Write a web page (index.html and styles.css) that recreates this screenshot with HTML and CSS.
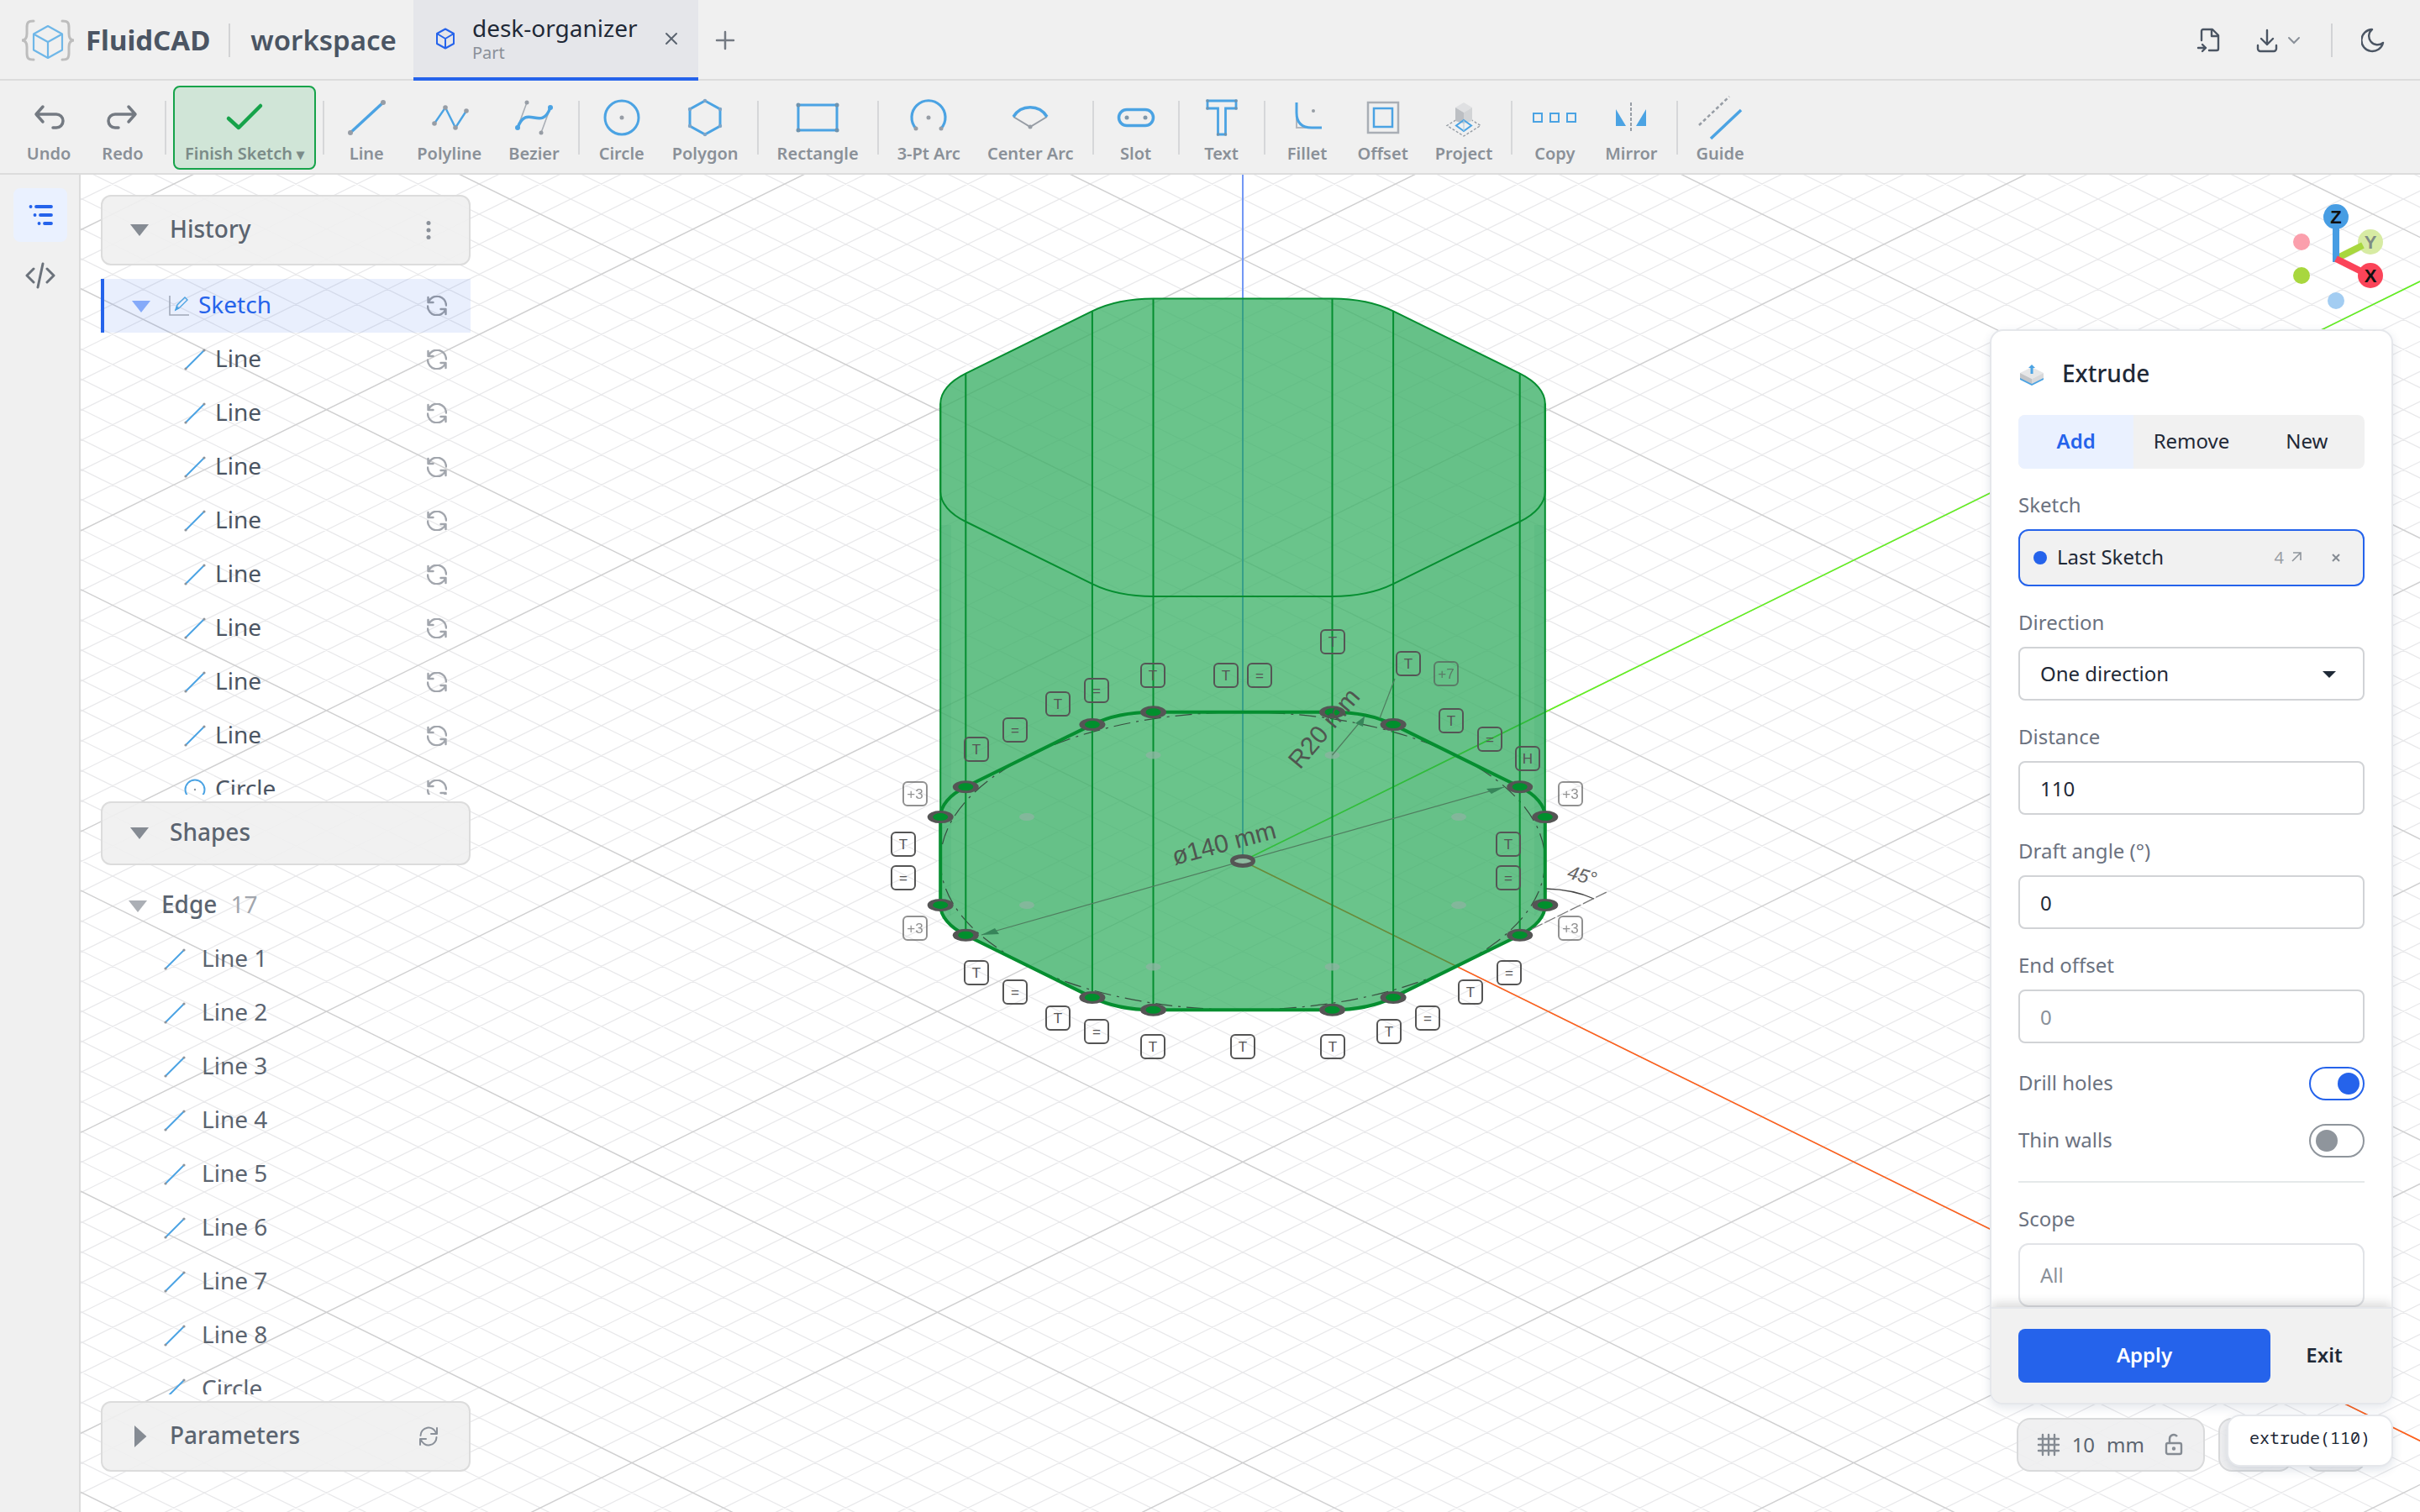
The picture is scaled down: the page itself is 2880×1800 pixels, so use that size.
FILE: index.html
```html
<!DOCTYPE html>
<html lang="en">
<head>
<meta charset="utf-8">
<title>FluidCAD - desk-organizer</title>
<link rel="stylesheet" href="styles.css">
</head>
<body>
<svg class="defs" aria-hidden="true">
  <symbol id="i-line" viewBox="0 0 28 28"><path d="M3 25 25 3" stroke="#4ba3e3" stroke-width="2"/><circle cx="3" cy="25" r="1.6" fill="#8f959c"/><circle cx="25" cy="3" r="1.6" fill="#8f959c"/></symbol>
  <symbol id="i-circle" viewBox="0 0 28 28"><circle cx="14" cy="14" r="11.5" fill="none" stroke="#4ba3e3" stroke-width="2"/><circle cx="14" cy="14" r="1.2" fill="#8f959c"/></symbol>
  <symbol id="i-sync" viewBox="0 0 24 24"><g fill="none" stroke="currentColor" stroke-width="2.4" stroke-linecap="round" stroke-linejoin="round"><path d="M1.5 2v6h6M1.8 7.6A11 11 0 0 1 23 11.5"/><path d="M22.500 22v-6h-6M22.200 16.400A11 11 0 0 1 1 12.500"/></g></symbol>
  <symbol id="i-cube" viewBox="0 0 24 26"><path d="M12 1.500 22 7v12l-10 5.500L2 19V7zM2 7l10 6 10-6M12 13v11.500" fill="none" stroke="currentColor" stroke-width="2" stroke-linejoin="round"/></symbol>
</svg>

<header class="topbar">
  <a class="brand" href="#">
    <svg width="66" height="50" viewBox="0 0 66 50" fill="none"><g stroke="#bdbdbd" stroke-width="3" stroke-linecap="round"><path d="M16 2c-7 0-8 2-8 8v7c0 5-2 8-6 8 4 0 6 3 6 8v7c0 6 1 8 8 8"/><path d="M50 2c7 0 8 2 8 8v7c0 5 2 8 6 8-4 0-6 3-6 8v7c0 6-1 8-8 8"/></g><path d="M33 8 50 17.500v19L33 46 16 36.500v-19zM16 17.500l17 9.500 17-9.500M33 27v19" stroke="#6fb7e8" stroke-width="2.200" stroke-linejoin="round"/></svg>
    <span>FluidCAD</span>
  </a>
  <span class="rule"></span>
  <a class="workspace" href="#">workspace</a>
  <div class="tab">
    <svg class="tab-icon" width="24" height="26"><use href="#i-cube"/></svg>
    <div class="tab-text"><a class="tab-name" href="#">desk-organizer</a><span class="tab-kind">Part</span></div>
    <button class="bare" aria-label="Close tab"><svg width="16" height="16" viewBox="0 0 16 16"><path d="m2 2 12 12M14 2 2 14" stroke="#5b6470" stroke-width="2" stroke-linecap="round"/></svg></button>
  </div>
  <button class="bare add-tab" aria-label="New tab"><svg width="24" height="24" viewBox="0 0 24 24"><path d="M12 2v20M2 12h20" stroke="#747a82" stroke-width="2.500" stroke-linecap="round"/></svg></button>
  <div class="top-actions">
    <button class="bare" aria-label="Import"><svg width="28" height="30" viewBox="0 0 28 30" fill="none" stroke="#4b5563" stroke-width="2.400" stroke-linecap="round" stroke-linejoin="round"><path d="M6 15V4a2 2 0 0 1 2-2h11l7 7v16a2 2 0 0 1-2 2h-9M18 2v8h8M2 24h9M7 20l4 4-4 4"/></svg></button>
    <button class="bare download" aria-label="Export"><svg width="28" height="30" viewBox="0 0 28 30" fill="none" stroke="#4b5563" stroke-width="2.400" stroke-linecap="round" stroke-linejoin="round"><path d="M14 3v17M7 13l7 7 7-7M3 21v4a3 3 0 0 0 3 3h16a3 3 0 0 0 3-3v-4"/></svg><svg width="16" height="12" viewBox="0 0 16 12" fill="none"><path d="m2 3 6 6 6-6" stroke="#8a9099" stroke-width="2" stroke-linecap="round"/></svg></button>
    <span class="rule"></span>
    <button class="bare" aria-label="Dark mode"><svg width="28" height="30" viewBox="0 0 28 30"><path d="M13 2A13 13 0 1 0 26 18 10 10 0 0 1 13 2z" fill="none" stroke="#4b5563" stroke-width="2.400" stroke-linejoin="round"/></svg></button>
  </div>
</header>

<div class="toolbar" role="toolbar">
  <button class="tool"><svg viewBox="0 0 56 56" fill="none" stroke="#747a82" stroke-width="3.500" stroke-linecap="round" stroke-linejoin="round"><path d="m21 15-8 9 8 9M13 24h24a8 8 0 0 1 0 16h-4"/></svg>Undo</button>
  <button class="tool"><svg viewBox="0 0 56 56" fill="none" stroke="#747a82" stroke-width="3.500" stroke-linecap="round" stroke-linejoin="round"><path d="m35 15 8 9-8 9M43 24H19a8 8 0 0 0 0 16h4"/></svg>Redo</button>
  <span class="sep"></span>
  <button class="tool finish"><svg viewBox="0 0 56 56" fill="none" stroke="#16a34a" stroke-width="4.500" stroke-linecap="round" stroke-linejoin="round"><path d="m9 29 12 11 26-26"/></svg><span>Finish Sketch <span class="caret">▾</span></span></button>
  <span class="sep"></span>
  <button class="tool"><svg viewBox="0 0 56 56"><path d="M9 46 48 10" stroke="#4ba3e3" stroke-width="3.500"/><g fill="#979da5"><circle cx="9" cy="46" r="3"/><circle cx="48" cy="10" r="3"/></g></svg>Line</button>
  <button class="tool"><svg viewBox="0 0 56 56"><path d="m10 35 13-19 12 24 13-20" fill="none" stroke="#4ba3e3" stroke-width="2.400"/><g fill="#979da5"><circle cx="10" cy="35" r="2.800"/><circle cx="23" cy="16" r="2.800"/><circle cx="35" cy="40" r="2.800"/><circle cx="48" cy="20" r="2.800"/></g></svg>Polyline</button>
  <button class="tool"><svg viewBox="0 0 56 56" fill="none"><path d="M8 40 19 10M47 16 36 46" stroke="#a9aeb5" stroke-width="1.600"/><path d="M8 40C19 10 36 46 47 16" stroke="#4ba3e3" stroke-width="3.500"/><g fill="#4ba3e3"><circle cx="8" cy="40" r="3"/><circle cx="47" cy="16" r="3"/></g><g fill="#979da5"><circle cx="19" cy="10" r="2.500"/><circle cx="36" cy="46" r="2.500"/></g></svg>Bezier</button>
  <span class="sep"></span>
  <button class="tool"><svg viewBox="0 0 56 56"><circle cx="28" cy="28" r="20" fill="none" stroke="#4ba3e3" stroke-width="3"/><circle cx="28" cy="28" r="2.500" fill="#979da5"/></svg>Circle</button>
  <button class="tool"><svg viewBox="0 0 56 56"><path d="m28 8 18 10v20L28 48 10 38V18z" fill="none" stroke="#4ba3e3" stroke-width="3"/><g fill="#7fa5c6"><circle cx="28" cy="8" r="2.200"/><circle cx="46" cy="18" r="2.200"/><circle cx="46" cy="38" r="2.200"/><circle cx="28" cy="48" r="2.200"/><circle cx="10" cy="38" r="2.200"/><circle cx="10" cy="18" r="2.200"/></g></svg>Polygon</button>
  <span class="sep"></span>
  <button class="tool"><svg viewBox="0 0 56 56"><path d="M5 13h46v30H5z" fill="none" stroke="#4ba3e3" stroke-width="3"/><g fill="#6f93ae"><circle cx="5" cy="13" r="2.500"/><circle cx="51" cy="13" r="2.500"/><circle cx="5" cy="43" r="2.500"/><circle cx="51" cy="43" r="2.500"/></g></svg>Rectangle</button>
  <span class="sep"></span>
  <button class="tool"><svg viewBox="0 0 56 56"><path d="M13 41a20 20 0 1 1 30 0" fill="none" stroke="#4ba3e3" stroke-width="3.200"/><g fill="#979da5"><circle cx="13" cy="41" r="2.500"/><circle cx="43" cy="41" r="2.500"/><circle cx="28" cy="28" r="2.500"/></g></svg>3-Pt Arc</button>
  <button class="tool"><svg viewBox="0 0 56 56" fill="none"><path d="m8 27 20 12 20-12" stroke="#979da5" stroke-width="2"/><path d="M8 27a23.500 23.500 0 0 1 40 0" stroke="#4ba3e3" stroke-width="3.500"/><circle cx="28" cy="39" r="2.500" fill="#979da5"/></svg>Center Arc</button>
  <span class="sep"></span>
  <button class="tool"><svg viewBox="0 0 56 56"><rect x="7.500" y="18.500" width="41" height="19" rx="9.500" fill="none" stroke="#4ba3e3" stroke-width="3.500"/><g fill="#7f97aa"><circle cx="17" cy="28" r="2.500"/><circle cx="39" cy="28" r="2.500"/></g></svg>Slot</button>
  <span class="sep"></span>
  <button class="tool"><svg viewBox="0 0 56 56"><path d="M11 8h34v9H32.500v31h-9V17H11z" fill="none" stroke="#4ba3e3" stroke-width="2.800"/><g fill="#6f93ae"><circle cx="11" cy="8" r="1.800"/><circle cx="45" cy="8" r="1.800"/><circle cx="11" cy="17" r="1.800"/><circle cx="45" cy="17" r="1.800"/><circle cx="23.500" cy="48" r="1.800"/><circle cx="32.500" cy="48" r="1.800"/></g></svg>Text</button>
  <span class="sep"></span>
  <button class="tool"><svg viewBox="0 0 56 56" fill="none"><path d="M15 22v18h16" stroke="#b4b8be" stroke-width="2"/><path d="M15 10v12c0 12 6 18 18 18h12" stroke="#4ba3e3" stroke-width="3"/><circle cx="35" cy="20" r="2" fill="#979da5"/></svg>Fillet</button>
  <button class="tool"><svg viewBox="0 0 56 56" fill="none"><path d="M10 10h36v36H10z" stroke="#a9aeb5" stroke-width="2.500"/><path d="M17 17h22v22H17z" stroke="#4ba3e3" stroke-width="2.500"/></svg>Offset</button>
  <button class="tool"><svg viewBox="0 0 56 56" fill="none"><path d="m28 25 20 12.500L28 50 8 37.500z" stroke="#979da5" stroke-width="1.400" stroke-dasharray="3 2"/><path d="m28 10 10 6-10 6-10-6z" fill="#dfe0e2"/><path d="M18 16v16l10 3V22z" fill="#bcbfc3"/><path d="M38 16v16l-10 3V22z" fill="#d2d4d6"/><path d="m28 31 9 6.500-9 6.500-9-6.500z" stroke="#4ba3e3" stroke-width="2"/><path d="M28 31v13" stroke="#a9c9e0" stroke-width="1"/></svg>Project</button>
  <span class="sep"></span>
  <button class="tool"><svg viewBox="0 0 56 56" fill="none" stroke="#4ba3e3" stroke-width="2"><path d="M3 23h10v10H3zM23 23h10v10H23zM43 23h10v10H43z"/></svg>Copy</button>
  <button class="tool"><svg viewBox="0 0 56 56"><path d="M10 18v20h12zM46 18v20H34z" fill="#4ba3e3"/><path d="M28 10v36" stroke="#979da5" stroke-width="2" stroke-dasharray="4 2"/></svg>Mirror</button>
  <span class="sep"></span>
  <button class="tool"><svg viewBox="0 0 56 56"><path d="M3 37 39 3" stroke="#979da5" stroke-width="2.600" stroke-dasharray="4 3"/><path d="m17 53 36-34" stroke="#4ba3e3" stroke-width="3.500"/></svg>Guide</button>
</div>

<div class="work">
  <nav class="rail">
    <button class="rail-btn active" aria-label="Model tree"><svg width="32" height="32" viewBox="0 0 32 32" stroke="#2563eb" stroke-width="3.800" stroke-linecap="round"><path d="M4.500 6h.1M11 6h18M9.500 16h.1M16 16h13M14.500 26h.1M21 26h8"/></svg></button>
    <button class="rail-btn" aria-label="Code"><svg width="36" height="32" viewBox="0 0 36 32" fill="none" stroke="#6b727b" stroke-width="3" stroke-linecap="round" stroke-linejoin="round"><path d="m10 8-8 8 8 8M26 8l8 8-8 8M21 2l-6 28"/></svg></button>
  </nav>

  <main class="viewport">
    <svg class="scene" viewBox="-1383 -817 2784 1592" preserveAspectRatio="xMidYMid slice">
      <defs>
        <g id="tag"><rect x="-14" y="-14" width="28" height="28" rx="5" fill="none" stroke="#555" stroke-width="2"/></g>
        <g id="knot"><ellipse rx="15.500" ry="7.500" fill="#555"/><ellipse rx="9" ry="4.500" fill="#008f2d"/></g>
        <path id="outline" d="M-106.500-177.300H106.500A102.800 50.600 0 0 1 179.100-162.400L329.700-88.200A102.800 50.600 0 0 1 359.800-52.400V52.400A102.800 50.600 0 0 1 329.700 88.200L179.100 162.400A102.800 50.600 0 0 1 106.500 177.300H-106.500A102.800 50.600 0 0 1-179.100 162.400L-329.700 88.200A102.800 50.600 0 0 1-359.800 52.400V-52.400A102.800 50.600 0 0 1-329.700-88.200L-179.100-162.400A102.800 50.600 0 0 1-106.500-177.300Z"/>
        <path id="hull" d="M-106.500-669.500H106.500A102.800 50.600 0 0 1 179.100-654.600L329.700-580.400A102.800 50.600 0 0 1 359.800-544.600V52.400A102.800 50.600 0 0 1 329.700 88.200L179.100 162.400A102.800 50.600 0 0 1 106.500 177.300H-106.500A102.800 50.600 0 0 1-179.100 162.400L-329.700 88.200A102.800 50.600 0 0 1-359.800 52.400V-544.600A102.800 50.600 0 0 1-329.700-580.400L-179.100-654.600A102.800 50.600 0 0 1-106.500-669.500Z"/>
      </defs>
      <path id="grid-minor" class="grid-minor"/>
      <path id="grid-major" class="grid-major"/>
      <use href="#hull" fill="#fff" fill-opacity=".4"/>
      <path d="M0 0V-817" stroke="#7398f5" stroke-width="2"/>
      <path d="M0 0 1401-690" stroke="#62f01f" stroke-width="1.600"/>
      <path d="M0 0 1573 775" stroke="#ff5f1a" stroke-width="1.600"/>

      <use href="#hull" class="solid"/>
      <path fill="#128a55" opacity=".04" d="M-359.800-544.600A102.800 50.600 0 0 1-329.700-580.400L-179.100-654.600V162.400L-329.700 88.200A102.800 50.600 0 0 1-359.800 52.400ZM359.800-544.600A102.800 50.600 0 0 0 329.700-580.400L179.100-654.600V162.400L329.700 88.200A102.800 50.600 0 0 0 359.800 52.400Z"/>
      <path fill="#128a55" opacity=".07" d="M-359-400h12V66l-12-14ZM359-400h-12V66l12-14Z"/>

      <ellipse rx="359.800" ry="177.200" fill="none" stroke="#2f3a33" stroke-opacity=".85" stroke-width="1.200" stroke-dasharray="20 7 3 7"/>
      <use href="#outline" y="-492.200" class="edge"/>
      <path class="edge" d="M-359.800-544.600V52.400M-329.700-580.400V88.200M-179.100-654.600V162.400M-106.500-669.500V177.300M359.800-544.600V52.400M329.700-580.400V88.200M179.100-654.600V162.400M106.500-669.500V177.300"/>
      <use href="#outline" class="edge-bold"/>

      <g fill="#8bb5a0" opacity=".8"><ellipse cx="-257" cy="-52.500" rx="9" ry="4.500"/><ellipse cx="-257" cy="52.500" rx="9" ry="4.500"/><ellipse cx="257" cy="-52.500" rx="9" ry="4.500"/><ellipse cx="257" cy="52.500" rx="9" ry="4.500"/><ellipse cx="-106.500" cy="-126" rx="9" ry="4.500"/><ellipse cx="106.500" cy="-126" rx="9" ry="4.500"/><ellipse cx="-106.500" cy="126" rx="9" ry="4.500"/><ellipse cx="106.500" cy="126" rx="9" ry="4.500"/></g>
      <path d="M-311 88 311-88M106.500-126 145-172M163-170 181-217" stroke="#4f7d5f" stroke-width="1.200"/>
      <path d="m-311 88 16-8 5 7ZM311-88l-21 2 6 6ZM145-172l-11 8 9 4Z" fill="#37855a"/>
      <path d="M361 33Q394 34 418 45" fill="none" stroke="#444" stroke-width="1.300"/>
      <path d="M344 81 433 37" stroke="#777" stroke-width="1.200" stroke-dasharray="14 3"/>

      <g><use href="#knot" x="-106.500" y="-177.300"/><use href="#knot" x="106.500" y="-177.300"/><use href="#knot" x="179.100" y="-162.400"/><use href="#knot" x="329.700" y="-88.200"/><use href="#knot" x="359.800" y="-52.400"/><use href="#knot" x="359.800" y="52.400"/><use href="#knot" x="329.700" y="88.200"/><use href="#knot" x="179.100" y="162.400"/><use href="#knot" x="106.500" y="177.300"/><use href="#knot" x="-106.500" y="177.300"/><use href="#knot" x="-179.100" y="162.400"/><use href="#knot" x="-329.700" y="88.200"/><use href="#knot" x="-359.800" y="52.400"/><use href="#knot" x="-359.800" y="-52.400"/><use href="#knot" x="-329.700" y="-88.200"/><use href="#knot" x="-179.100" y="-162.400"/></g>
      <ellipse rx="12.500" ry="5.500" fill="#8fbba1" stroke="#555" stroke-width="5"/>

      <text class="dim" transform="translate(-81 5) rotate(-15)">ø140 mm</text>
      <text class="dim" transform="translate(68 -108) rotate(-50)">R20 mm</text>
      <text class="dim-angle" transform="translate(385 20) rotate(16)">45°</text>

      <g class="tags">
        <g transform="translate(-404 -20)"><use href="#tag"/><text y="6">T</text></g>
        <g transform="translate(-404 20)"><use href="#tag"/><text y="6">=</text></g>
        <g transform="translate(-317 -133)"><use href="#tag"/><text y="6">T</text></g>
        <g transform="translate(-271 -156)"><use href="#tag"/><text y="6">=</text></g>
        <g transform="translate(-220 -187)"><use href="#tag"/><text y="6">T</text></g>
        <g transform="translate(-174 -203)"><use href="#tag"/><text y="6">=</text></g>
        <g transform="translate(-107 -221)"><use href="#tag"/><text y="6">T</text></g>
        <g transform="translate(-20 -221)"><use href="#tag"/><text y="6">T</text></g>
        <g transform="translate(20 -221)"><use href="#tag"/><text y="6">=</text></g>
        <g transform="translate(107 -261)"><use href="#tag"/><text y="6">T</text></g>
        <g transform="translate(197 -235)"><use href="#tag"/><text y="6">T</text></g>
        <g transform="translate(248 -167)"><use href="#tag"/><text y="6">T</text></g>
        <g transform="translate(294 -145)"><use href="#tag"/><text y="6">=</text></g>
        <g transform="translate(339 -122)"><use href="#tag"/><text y="6">H</text></g>
        <g transform="translate(316 -20)"><use href="#tag"/><text y="6">T</text></g>
        <g transform="translate(316 20)"><use href="#tag"/><text y="6">=</text></g>
        <g transform="translate(317 133)"><use href="#tag"/><text y="6">=</text></g>
        <g transform="translate(271 156)"><use href="#tag"/><text y="6">T</text></g>
        <g transform="translate(220 187)"><use href="#tag"/><text y="6">=</text></g>
        <g transform="translate(174 203)"><use href="#tag"/><text y="6">T</text></g>
        <g transform="translate(107 221)"><use href="#tag"/><text y="6">T</text></g>
        <g transform="translate(0 221)"><use href="#tag"/><text y="6">T</text></g>
        <g transform="translate(-107 221)"><use href="#tag"/><text y="6">T</text></g>
        <g transform="translate(-174 203)"><use href="#tag"/><text y="6">=</text></g>
        <g transform="translate(-220 187)"><use href="#tag"/><text y="6">T</text></g>
        <g transform="translate(-271 156)"><use href="#tag"/><text y="6">=</text></g>
        <g transform="translate(-317 133)"><use href="#tag"/><text y="6">T</text></g>
        <g class="more">
          <g transform="translate(-390 -80)"><use href="#tag"/><text y="6">+3</text></g>
          <g transform="translate(-390 80)"><use href="#tag"/><text y="6">+3</text></g>
          <g transform="translate(390 -80)"><use href="#tag"/><text y="6">+3</text></g>
          <g transform="translate(390 80)"><use href="#tag"/><text y="6">+3</text></g>
          <g transform="translate(242 -223)"><use href="#tag"/><text y="6">+7</text></g>
        </g>
      </g>
    </svg>

    <svg class="gizmo" width="128" height="136" viewBox="0 0 128 136">
      <circle cx="23" cy="48" r="10" fill="#fb9fac"/><circle cx="64" cy="118" r="10" fill="#a3cdf2"/>
      <circle cx="105" cy="48" r="15" fill="#d7eba3"/><path d="m64 68 32-16" stroke="#a8d73e" stroke-width="8"/>
      <path d="M64 72V18" stroke="#479de3" stroke-width="8"/><path d="m64 68 40 20" stroke="#fb4459" stroke-width="8"/>
      <circle cx="64" cy="18" r="15" fill="#479de3"/><circle cx="105" cy="88" r="15" fill="#fb4459"/><circle cx="23" cy="88" r="10" fill="#a8d73e"/>
      <g class="gizmo-text"><text x="64" y="26">Z</text><text x="105" y="56" class="back">Y</text><text x="105" y="96">X</text></g>
    </svg>

    <aside class="tree">
      <section class="group group-history">
        <div class="group-head tall"><button class="bare disclose"><span class="tri"></span><span class="name">History</span></button><button class="bare end" aria-label="History menu"><svg width="28" height="28" viewBox="0 0 28 28" fill="#8a9099"><circle cx="14" cy="5.500" r="2.500"/><circle cx="14" cy="14" r="2.500"/><circle cx="14" cy="22.500" r="2.500"/></svg></button></div>
        <ul class="list history">
          <li class="row selected"><span class="tri"></span><svg width="26" height="26" viewBox="0 0 26 26" fill="none"><path d="M2 1v23h23" stroke="#a0a8b8" stroke-width="1.600"/><path d="m9 18 2-6 9-9 3 3-9 9z" stroke="#4ba3e3" stroke-width="1.400"/><path d="m8 19 2-6 4 3z" fill="#4ba3e3"/></svg><span class="name">Sketch</span><svg class="sync"><use href="#i-sync"/></svg></li>
          <li class="row"><svg class="ico"><use href="#i-line"/></svg><span class="name">Line</span><svg class="sync"><use href="#i-sync"/></svg></li>
          <li class="row"><svg class="ico"><use href="#i-line"/></svg><span class="name">Line</span><svg class="sync"><use href="#i-sync"/></svg></li>
          <li class="row"><svg class="ico"><use href="#i-line"/></svg><span class="name">Line</span><svg class="sync"><use href="#i-sync"/></svg></li>
          <li class="row"><svg class="ico"><use href="#i-line"/></svg><span class="name">Line</span><svg class="sync"><use href="#i-sync"/></svg></li>
          <li class="row"><svg class="ico"><use href="#i-line"/></svg><span class="name">Line</span><svg class="sync"><use href="#i-sync"/></svg></li>
          <li class="row"><svg class="ico"><use href="#i-line"/></svg><span class="name">Line</span><svg class="sync"><use href="#i-sync"/></svg></li>
          <li class="row"><svg class="ico"><use href="#i-line"/></svg><span class="name">Line</span><svg class="sync"><use href="#i-sync"/></svg></li>
          <li class="row"><svg class="ico"><use href="#i-line"/></svg><span class="name">Line</span><svg class="sync"><use href="#i-sync"/></svg></li>
          <li class="row"><svg class="ico"><use href="#i-circle"/></svg><span class="name">Circle</span><svg class="sync"><use href="#i-sync"/></svg></li>
        </ul>
      </section>
      <section class="group group-shapes">
        <div class="group-head"><button class="bare disclose"><span class="tri"></span><span class="name">Shapes</span></button></div>
        <ul class="list shapes">
          <li class="row kind"><span class="tri"></span><span class="name">Edge</span><span class="name count">17</span></li>
          <li class="row"><svg class="ico"><use href="#i-line"/></svg><span class="name">Line 1</span></li>
          <li class="row"><svg class="ico"><use href="#i-line"/></svg><span class="name">Line 2</span></li>
          <li class="row"><svg class="ico"><use href="#i-line"/></svg><span class="name">Line 3</span></li>
          <li class="row"><svg class="ico"><use href="#i-line"/></svg><span class="name">Line 4</span></li>
          <li class="row"><svg class="ico"><use href="#i-line"/></svg><span class="name">Line 5</span></li>
          <li class="row"><svg class="ico"><use href="#i-line"/></svg><span class="name">Line 6</span></li>
          <li class="row"><svg class="ico"><use href="#i-line"/></svg><span class="name">Line 7</span></li>
          <li class="row"><svg class="ico"><use href="#i-line"/></svg><span class="name">Line 8</span></li>
          <li class="row"><svg class="ico"><use href="#i-line"/></svg><span class="name">Circle</span></li>
        </ul>
      </section>
      <div class="group-head tall"><button class="bare disclose"><span class="tri closed"></span><span class="name">Parameters</span></button><button class="bare end" aria-label="Refresh parameters"><svg width="24" height="24" viewBox="0 0 24 24" fill="none" stroke="#8a9099" stroke-width="2" stroke-linecap="round" stroke-linejoin="round"><path d="M22 2v7h-7M2 22v-7h7M2.500 11A9.500 9.500 0 0 1 21 8M21.500 13A9.500 9.500 0 0 1 3 16"/></svg></button></div>
    </aside>

    <div class="status">
      <button class="pill"><svg width="28" height="28" viewBox="0 0 28 28" stroke="#858b93" stroke-width="2.400" stroke-linecap="round"><path d="M7 2v24M14 2v24M21 2v24M2 7h24M2 14h24M2 21h24"/></svg><span>10</span><span>mm</span><svg class="lock" width="22" height="28" viewBox="0 0 22 28" fill="none" stroke="#858b93" stroke-width="2.400"><rect x="2" y="12" width="18" height="13" rx="2"/><path d="M6 12V7a5 5 0 0 1 9-3"/><circle cx="11" cy="18.500" r="1"/></svg></button>
      <button class="pill blank-wide" aria-label="Camera"></button>
      <button class="pill blank" aria-label="Fit view"></button>
    </div>

    <form class="dialog">
      <div class="dialog-body">
        <h2><svg width="32" height="32" viewBox="0 0 32 32"><path d="m2 21 14 7 14-7v3l-14 7-14-7z" fill="#4ba3e3"/><path d="m16 9 14 7-14 7-14-7z" fill="#e6e7e8"/><path d="M2 16v6l14 7v-6z" fill="#c3c5c8"/><path d="M30 16v6l-14 7v-6z" fill="#d8d9db"/><path d="m16 6 4 4h-2.500v7h-3v-7H12z" fill="#4ba3e3"/></svg>Extrude</h2>
        <div class="segments"><button type="button" class="on">Add</button><button type="button">Remove</button><button type="button">New</button></div>
        <div class="field"><span class="label">Sketch</span>
          <div class="pick"><span class="dot"></span><span class="pick-name">Last Sketch</span><span class="pick-ref">4 <svg width="14" height="14" viewBox="0 0 14 14"><path d="M3 2h9v9M12 2 2 12" fill="none" stroke="#8f959c" stroke-width="1.600"/></svg></span><button type="button" class="bare" aria-label="Clear"><svg width="12" height="12" viewBox="0 0 12 12"><path d="m2 2 8 8M10 2l-8 8" stroke="#858b93" stroke-width="2"/></svg></button></div>
        </div>
        <div class="field"><label for="direction">Direction</label><div class="select"><select id="direction"><option>One direction</option></select></div></div>
        <div class="field"><label for="distance">Distance</label><input id="distance" type="text" value="110"></div>
        <div class="field"><label for="draft">Draft angle (°)</label><input id="draft" type="text" value="0"></div>
        <div class="field"><label for="offset">End offset</label><input id="offset" type="text" placeholder="0"></div>
        <div class="toggles">
          <div class="toggle"><label for="drill">Drill holes</label><input id="drill" type="checkbox" checked></div>
          <div class="toggle"><label for="thin">Thin walls</label><input id="thin" type="checkbox"></div>
        </div>
        <hr>
        <div class="field"><label for="scope">Scope</label><input id="scope" class="scope" type="text" placeholder="All"></div>
      </div>
      <div class="dialog-foot"><button type="button" class="apply">Apply</button><button type="button" class="exit">Exit</button></div>
    </form>
    <output class="hint">extrude(110)</output>
  </main>
</div>
<script src="grid.js"></script>
</body>
</html>
```

FILE: styles.css
```css
* { box-sizing: border-box; }
body {
  margin: 0;
  height: 100vh;
  display: flex;
  flex-direction: column;
  overflow: hidden;
  background: #fff;
  color: #4b5563;
  font-family: "Noto Sans", "Open Sans", sans-serif;
  font-size: 28px;
}
button, input, select { font: inherit; color: inherit; }
a { color: inherit; text-decoration: none; }
svg { flex: none; display: block; }
.defs { position: absolute; width: 0; height: 0; }
.bare { border: 0; background: none; padding: 0; display: flex; align-items: center; }

/* Top bar */
.topbar {
  flex: none;
  height: 96px;
  display: flex;
  align-items: center;
  background: #f0f0f0;
  box-shadow: inset 0 -2px #dcdcdc;
  padding-left: 24px;
}
.brand { display: flex; align-items: center; gap: 12px; font-size: 33px; font-weight: 700; line-height: 46px; }
.rule { width: 2px; height: 40px; background: #d2d3d5; margin: 0 24px 0 22px; }
.workspace { font-size: 33px; font-weight: 600; line-height: 46px; margin-right: 20px; }
.tab {
  height: 96px;
  display: flex;
  align-items: center;
  gap: 20px;
  padding: 0 24px 0 26px;
  background: #e5e6ea;
  border-bottom: 4px solid #2563eb;
}
.tab-icon { color: #2563eb; }
.tab-text { display: flex; flex-direction: column; margin-right: 12px; }
.tab-name { color: #1f2937; line-height: 34px; }
.tab-kind { color: #8a9099; font-size: 20px; line-height: 26px; }
.add-tab { margin-left: 20px; }
.top-actions { margin-left: auto; display: flex; align-items: center; padding-right: 42px; }
.top-actions .rule { margin: 0 34px 0 36px; }
.download { margin-left: 42px; gap: 10px; }

/* Sketch tools */
.toolbar {
  flex: none;
  height: 112px;
  display: flex;
  align-items: center;
  gap: 4px;
  padding: 0 16px;
  background: #f0f0f0;
  box-shadow: inset 0 -2px #dcdcdc;
}
.tool {
  height: 100px;
  display: flex;
  flex-direction: column;
  align-items: center;
  padding: 8px 12px 0;
  border: 2px solid transparent;
  border-radius: 8px;
  background: none;
  color: #8a9098;
  font-size: 20px;
  font-weight: 600;
  line-height: 30px;
  white-space: nowrap;
}
.tool svg { width: 56px; height: 56px; }
.finish { border-color: #16a34a; background: #d0e5d7; color: #7b8b88; }
.caret { font-size: 18px; }
.sep { width: 2px; height: 64px; margin: 0 4px; background: #d6d7d9; }

.work { flex: 1; min-height: 0; display: flex; }
.rail {
  width: 96px;
  display: flex;
  flex-direction: column;
  gap: 8px;
  padding: 16px 14px 16px 16px;
  background: #f0f0f0;
  border-right: 2px solid #dcdcdc;
}
.rail-btn { width: 64px; height: 64px; padding: 0; border: 0; border-radius: 8px; background: none; display: grid; place-items: center; }
.rail-btn.active { background: #eaf1ff; }

/* Modelling canvas */
.viewport { position: relative; flex: 1; min-width: 0; overflow: hidden; }
.scene { position: absolute; inset: 0; width: 100%; height: 100%; }
.grid-minor { fill: none; stroke: #e9e9eb; stroke-width: 1.3; }
.grid-major { fill: none; stroke: #d0d0d1; stroke-width: 1.5; }
.solid { fill: #16a34a; fill-opacity: .64; }
.edge { fill: none; stroke: #058e30; stroke-width: 2; }
.edge-bold { fill: none; stroke: #058e30; stroke-width: 4; }
.dim { font: 30px "Liberation Sans", sans-serif; fill: #4f5650; }
.dim-angle { font: italic 23px "Liberation Sans", sans-serif; fill: #666; }
.tags text { font: 17px "Liberation Sans", sans-serif; fill: #555; text-anchor: middle; }
.more { opacity: .65; }
.gizmo { position: absolute; top: 32px; right: 36px; }
.gizmo-text { font: bold 22px "Liberation Sans", sans-serif; fill: #111; text-anchor: middle; }
.gizmo-text .back { fill: #7f8c84; }

/* Model tree */
.tree { position: absolute; top: 24px; bottom: 48px; left: 24px; width: 440px; display: flex; flex-direction: column; gap: 8px; }
.group { min-height: 0; display: flex; flex-direction: column; gap: 16px; }
.group-history { flex: 1 1 100px; }
.group-shapes { flex: 1 1 92px; }
.group-head {
  flex: none;
  height: 76px;
  display: flex;
  align-items: center;
  padding: 0 32px;
  border: 2px solid #dcdcdc;
  border-radius: 12px;
  background: rgba(240, 240, 240, .9);
}
.group-head.tall { height: 84px; }
.disclose { gap: 24px; font-weight: 500; color: #5b6470; }
.name { padding-bottom: 4px; }
.end { width: 32px; justify-content: center; margin-left: auto; }
.tri { width: 24px; height: 14px; background: #858b93; clip-path: polygon(4% 0, 96% 0, 50% 100%); }
.tri.closed { height: 26px; clip-path: polygon(25% 0, 85% 50%, 25% 100%); }
.list { flex: 1 1 0; min-height: 0; overflow: hidden; margin: 0; padding: 0; list-style: none; }
.row { height: 64px; display: flex; align-items: center; }
.row .tri { margin-top: 2px; }
.row .name { padding-bottom: 5px; }
.ico { width: 28px; height: 28px; }
.sync { width: 24px; height: 24px; margin-left: auto; color: #a2a6ad; }
.history .row { gap: 10px; padding: 0 28px 0 98px; }
.history .row.selected {
  padding-left: 32px;
  border-left: 4px solid #2563eb;
  background: rgba(37, 99, 235, .1);
  color: #2563eb;
}
.selected .tri { background: #85aaf9; margin-right: 10px; }
.selected .sync { color: #8f97a8; }
.shapes .row { gap: 18px; padding-left: 74px; color: #5b6470; }
.shapes .kind { padding-left: 32px; gap: 16px; font-weight: 500; }
.shapes .tri { background: #abafb5; }
.shapes .count { color: #a2a6ad; font-weight: 400; }

/* Feature dialog */
.dialog {
  position: absolute;
  top: 184px;
  right: 32px;
  bottom: 128px;
  width: 480px;
  display: flex;
  flex-direction: column;
  overflow: hidden;
  border: 2px solid #e5e7eb;
  border-radius: 16px;
  background: #fff;
  box-shadow: 0 4px 12px rgba(30, 60, 100, .12);
  color: #1f2937;
  font-size: 24px;
}
.dialog-body { flex: 1; min-height: 0; overflow: hidden; display: flex; flex-direction: column; gap: 24px; padding: 24px 32px 0; }
.dialog-body > * { flex: none; }
h2 { margin: 0; display: flex; align-items: center; gap: 20px; font-size: 28px; font-weight: 500; line-height: 52px; }
.segments { display: flex; height: 64px; border-radius: 8px; overflow: hidden; background: #f1f1f1; }
.segments button { flex: 1 1 0; padding: 0 0 4px; border: 0; background: none; }
.segments .on { background: #eaf1ff; color: #2563eb; font-weight: 600; }
.field { display: flex; flex-direction: column; gap: 8px; }
.field label, .label, .toggle label { padding-bottom: 2px; line-height: 38px; color: #6b7280; }
.field input, .select select {
  width: 100%;
  height: 64px;
  padding: 0 24px;
  border: 2px solid #d1d3d6;
  border-radius: 8px;
  background: #fff;
  appearance: none;
}
.select select { padding-bottom: 2px; }
.field input::placeholder { color: #8a9099; opacity: 1; }
.field .scope { height: 76px; padding-bottom: 2px; border-color: #e1e3e7; border-radius: 12px; }
.select { position: relative; }
.select::after {
  content: "";
  position: absolute;
  top: 29px;
  right: 34px;
  border: 8px solid transparent;
  border-top-color: #1f2937;
  border-bottom: 0;
}
.pick { height: 68px; display: flex; align-items: center; padding: 0 26px 0 16px; border: 2px solid #2563eb; border-radius: 12px; background: #f1f1f1; }
.dot { width: 16px; height: 16px; border-radius: 50%; background: #2563eb; }
.pick-name { margin-left: 12px; padding-bottom: 4px; }
.pick-ref { display: flex; align-items: center; gap: 8px; margin: 0 34px 0 auto; padding-bottom: 2px; font-size: 20px; color: #9a9ea5; }
.toggles { display: flex; flex-direction: column; gap: 20px; }
.toggle { height: 48px; display: flex; align-items: center; justify-content: space-between; }
.toggle input {
  appearance: none;
  width: 66px;
  height: 40px;
  margin: 0;
  padding: 5px 6px;
  border: 2px solid #8f959c;
  border-radius: 20px;
  display: flex;
}
.toggle input::before { content: ""; width: 26px; height: 26px; border-radius: 50%; background: #8f959c; }
.toggle input:checked { border-color: #2563eb; justify-content: flex-end; padding-right: 4px; }
.toggle input:checked::before { background: #2563eb; }
hr { width: 100%; margin: 0; border: 0; border-top: 2px solid #e5e9ea; }
.dialog-foot {
  flex: none;
  display: flex;
  gap: 16px;
  padding: 24px 32px;
  border-top: 2px solid #e5e7eb;
  background: #f1f1f1;
  box-shadow: 0 -4px 12px rgba(0, 0, 0, .16);
}
.dialog-foot button { height: 64px; padding: 0 0 4px; border: 0; border-radius: 8px; font-weight: 600; }
.dialog-foot .apply { flex: 1; background: #2563eb; color: #fff; }
.dialog-foot .exit { width: 96px; background: none; }

.status { position: absolute; right: 64px; bottom: 48px; display: flex; gap: 16px; }
.pill { height: 64px; display: flex; align-items: center; padding: 0 24px 0 22px; border: 2px solid #d9dadb; border-radius: 16px; background: rgba(238, 238, 239, .9); color: #5b6470; font-size: 24px; gap: 14px; }
.pill .lock { margin-left: 10px; }
.pill span { padding-bottom: 2px; }
.blank-wide { width: 88px; }
.blank { width: 72px; }
.hint {
  position: absolute;
  right: 32px;
  bottom: 54px;
  height: 62px;
  padding: 0 25px;
  border: 2px solid #e5e7eb;
  border-radius: 16px;
  background: #fff;
  box-shadow: 0 4px 12px rgba(30, 60, 100, .14);
  color: #1f2937;
  font: 20px/52px "Noto Sans Mono", "DejaVu Sans Mono", monospace;
}
```

FILE: grid.js
```js
// Ground grid: 10 mm cells, every tenth line is a major one.
const cell = { w: 72.7, h: 35.82 };
const slope = cell.h / cell.w;
const reach = 1700;
let minor = "";
let major = "";
for (let i = -75; i <= 75; i++) {
  const y = i * cell.h;
  const rise = reach * slope;
  const d = `M${-reach} ${y - rise}L${reach} ${y + rise}M${-reach} ${y + rise}L${reach} ${y - rise}`;
  if (i % 10 === 0) major += d;
  else minor += d;
}
document.getElementById("grid-minor").setAttribute("d", minor);
document.getElementById("grid-major").setAttribute("d", major);
```
